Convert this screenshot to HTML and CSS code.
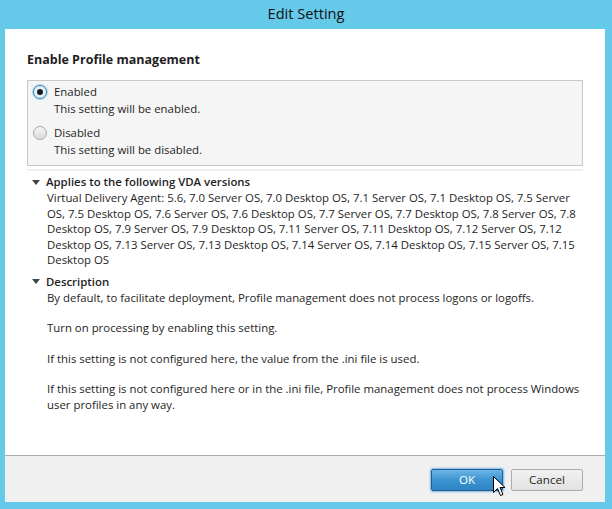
FILE: index.html
```html
<!DOCTYPE html>
<html>
<head>
<meta charset="utf-8">
<link rel="stylesheet" href="styles.css">
</head>
<body>
<div class="window">
  <div class="titlebar">Edit Setting</div>
  <div class="client">
    <div class="content">
      <h1 class="heading">Enable Profile management</h1>
      <div class="options">
        <div class="option">
          <span class="radio checked"><span class="dot"></span></span>
          <div class="opt-text">
            <div class="opt-label">Enabled</div>
            <div class="opt-desc">This setting will be enabled.</div>
          </div>
        </div>
        <div class="option">
          <span class="radio"></span>
          <div class="opt-text">
            <div class="opt-label">Disabled</div>
            <div class="opt-desc">This setting will be disabled.</div>
          </div>
        </div>
      </div>
      <div class="strip"></div>
      <div class="section">
        <div class="sec-head"><span class="tri"></span>Applies to the following VDA versions</div>
        <div class="sec-body">
          <p>Virtual Delivery Agent: 5.6, 7.0 Server OS, 7.0 Desktop OS, 7.1 Server OS, 7.1 Desktop OS, 7.5 Server OS, 7.5 Desktop OS, 7.6 Server OS, 7.6 Desktop OS, 7.7 Server OS, 7.7 Desktop OS, 7.8 Server OS, 7.8 Desktop OS, 7.9 Server OS, 7.9 Desktop OS, 7.11 Server OS, 7.11 Desktop OS, 7.12 Server OS, 7.12 Desktop OS, 7.13 Server OS, 7.13 Desktop OS, 7.14 Server OS, 7.14 Desktop OS, 7.15 Server OS, 7.15 Desktop OS</p>
        </div>
      </div>
      <div class="section">
        <div class="sec-head"><span class="tri"></span>Description</div>
        <div class="sec-body">
          <p>By default, to facilitate deployment, Profile management does not process logons or logoffs.</p>
          <p>Turn on processing by enabling this setting.</p>
          <p>If this setting is not configured here, the value from the .ini file is used.</p>
          <p>If this setting is not configured here or in the .ini file, Profile management does not process Windows user profiles in any way.</p>
        </div>
      </div>
    </div>
    <div class="footer">
      <button class="btn primary">OK</button>
      <button class="btn">Cancel</button>
      <svg class="cursor" width="13" height="21" viewBox="0 0 13 21">
        <path d="M0.5 0.5 L0.5 16.5 L4.5 12.5 L7.5 19.5 L10 18.5 L7 11.5 L12 11.5 Z" fill="#fff" stroke="#000" stroke-width="1" stroke-linejoin="miter"/>
      </svg>
    </div>
  </div>
</div>
</body>
</html>
```

FILE: styles.css
```css
html, body {
  margin: 0;
  padding: 0;
}
body {
  width: 612px;
  height: 509px;
  background: #65c9ea;
  font-family: "Open Sans", "Noto Sans", sans-serif;
  font-size: 11.4px;
  color: #1e1e1e;
  overflow: hidden;
}
.window {
  display: flex;
  flex-direction: column;
  height: 509px;
}
.titlebar {
  height: 29px;
  line-height: 27px;
  text-align: center;
  font-size: 14.6px;
  color: #111;
}
.client {
  margin: 0 7px 7px 5px;
  flex: 1;
  display: flex;
  flex-direction: column;
  background: #fff;
}
.content {
  flex: 1;
  padding: 20px 22px 0 22px;
}
.heading {
  margin: 0 0 9px 0;
  font-size: 12.5px;
  font-weight: bold;
  line-height: 22px;
}
.options {
  border: 1px solid #c9c9c9;
  background: #f5f5f5;
  padding: 2px 6px 4px 5px;
  height: 78px;
}
.option {
  display: flex;
  align-items: flex-start;
  margin-bottom: 7px;
}
.radio {
  width: 12px;
  height: 12px;
  border-radius: 50%;
  border: 1px solid #a8a8a8;
  background: linear-gradient(#f4f4f4, #dcdcdc);
  margin: 2px 7px 0 0;
  display: flex;
  align-items: center;
  justify-content: center;
  flex: none;
}
.radio.checked {
  border-color: #3c7fb1;
  background: linear-gradient(#eaf6fd, #d9f0fc);
  box-shadow: 0 0 1px 1px #a9d3ef;
}
.dot {
  width: 6px;
  height: 6px;
  border-radius: 50%;
  background: #1b1b1b;
}
.opt-label {
  line-height: 17px;
}
.opt-desc {
  line-height: 17px;
}
.strip {
  height: 2px;
  margin-top: 3px;
  background: #efefef;
}
.section {
  margin-top: 3px;
}
.sec-head {
  display: flex;
  align-items: center;
  font-weight: 600;
  line-height: 16px;
  padding-left: 5px;
}
.tri {
  width: 0;
  height: 0;
  border-left: 4.5px solid transparent;
  border-right: 4.5px solid transparent;
  border-top: 5px solid #444;
  margin-right: 6px;
}
.sec-body {
  padding-left: 20px;
}
.sec-body p {
  margin: 0 0 15px 0;
  line-height: 15.5px;
}
.section + .section {
  margin-top: -9px;
}
.footer {
  height: 46px;
  border-top: 1px solid #acacac;
  background: #f0f0f0;
  display: flex;
  align-items: center;
  justify-content: flex-end;
  gap: 8px;
  padding-right: 22px;
  position: relative;
}
.btn {
  width: 72px;
  height: 22px;
  font-family: inherit;
  font-size: 11.6px;
  color: #1e1e1e;
  border: 1px solid #acacac;
  border-radius: 2px;
  background: linear-gradient(#f2f2f2, #e2e2e2);
  padding: 0;
  margin-top: 1px;
}
.btn.primary {
  color: #fff;
  border-color: #1f5e95;
  background: linear-gradient(#6ab6e6, #3d93d0 50%, #2d85c6);
  box-shadow: 0 0 2px 1px #7ab8e2;
}
.cursor {
  position: absolute;
  left: 488px;
  top: 20px;
}
```
